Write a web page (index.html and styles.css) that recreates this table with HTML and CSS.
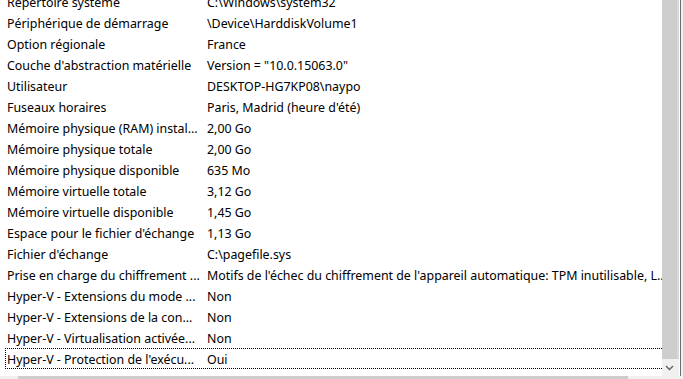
FILE: index.html
```html
<!DOCTYPE html>
<html lang="fr">
<head>
<meta charset="utf-8">
<link rel="stylesheet" href="styles.css">
</head>
<body>
<div class="window">
  <div class="main">
    <div class="list">
      <div class="rows">
        <div class="row"><span class="k">Répertoire système</span><span class="v">C:\Windows\system32</span></div>
        <div class="row"><span class="k">Périphérique de démarrage</span><span class="v">\Device\HarddiskVolume1</span></div>
        <div class="row"><span class="k">Option régionale</span><span class="v">France</span></div>
        <div class="row"><span class="k">Couche d'abstraction matérielle</span><span class="v">Version = "10.0.15063.0"</span></div>
        <div class="row"><span class="k">Utilisateur</span><span class="v">DESKTOP-HG7KP08\naypo</span></div>
        <div class="row"><span class="k">Fuseaux horaires</span><span class="v">Paris, Madrid (heure d'été)</span></div>
        <div class="row"><span class="k">Mémoire physique (RAM) instal...</span><span class="v">2,00 Go</span></div>
        <div class="row"><span class="k">Mémoire physique totale</span><span class="v">2,00 Go</span></div>
        <div class="row"><span class="k">Mémoire physique disponible</span><span class="v">635 Mo</span></div>
        <div class="row"><span class="k">Mémoire virtuelle totale</span><span class="v">3,12 Go</span></div>
        <div class="row"><span class="k">Mémoire virtuelle disponible</span><span class="v">1,45 Go</span></div>
        <div class="row"><span class="k">Espace pour le fichier d'échange</span><span class="v">1,13 Go</span></div>
        <div class="row"><span class="k">Fichier d'échange</span><span class="v">C:\pagefile.sys</span></div>
        <div class="row"><span class="k">Prise en charge du chiffrement ...</span><span class="v">Motifs de l'échec du chiffrement de l'appareil automatique: TPM inutilisable, L...</span></div>
        <div class="row"><span class="k">Hyper-V - Extensions du mode ...</span><span class="v">Non</span></div>
        <div class="row"><span class="k">Hyper-V - Extensions de la con...</span><span class="v">Non</span></div>
        <div class="row"><span class="k">Hyper-V - Virtualisation activée...</span><span class="v">Non</span></div>
        <div class="row focus"><span class="k">Hyper-V - Protection de l'exécu...</span><span class="v">Oui</span></div>
      </div>
    </div>
    <div class="vscroll">
      <div class="vthumb"></div>
      <div class="vbtn">
        <svg width="9" height="6" viewBox="0 0 9 6"><path d="M1 1 L4.5 4.5 L8 1" fill="none" stroke="#606060" stroke-width="1.4"/></svg>
      </div>
    </div>
    <div class="edge"></div>
  </div>
  <div class="hscroll">
    <div class="hbtn"></div>
    <div class="hthumb"></div>
    <div class="htrack"></div>
  </div>
</div>
</body>
</html>
```
FILE: styles.css
```css
html, body {
  margin: 0;
  padding: 0;
  background: #f0f0f0;
}
.window {
  width: 683px;
  height: 379px;
  overflow: hidden;
  display: flex;
  flex-direction: column;
  font-family: "Segoe UI", "Noto Sans", "Open Sans", sans-serif;
  font-size: 12.4px;
  color: #000;
}
.main {
  display: flex;
  height: 376px;
  flex: none;
}
.list {
  width: 662px;
  background: #fff;
  overflow: hidden;
}
.rows {
  margin-top: -9px;
}
.row {
  display: flex;
  height: 21px;
  align-items: center;
  white-space: nowrap;
  box-sizing: border-box;
  border: 1px solid transparent;
  margin-left: 5px;
  padding-top: 1px;
}
.k {
  width: 194px;
  padding-left: 1px;
  margin-right: 6px;
  overflow: hidden;
  flex: none;
}
.v {
  flex: none;
}
.focus {
  border: 1px dotted #000;
  margin-right: -4px;
}
.vscroll {
  width: 17px;
  display: flex;
  flex-direction: column;
  background: #f0f0f0;
}
.vthumb {
  height: 359px;
  background: #cdcdcd;
  border-right: 2px solid #d9d9d9;
  box-sizing: border-box;
  width: 17px;
}
.vbtn {
  flex: 1;
  display: flex;
  align-items: center;
  justify-content: center;
  padding-right: 2px;
}
.edge {
  width: 1px;
  background: #fff;
  border-right: 1px solid #6d6d6d;
}
.hscroll {
  flex: 1;
  display: flex;
  background: #f0f0f0;
}
.hbtn {
  width: 18px;
}
.hthumb {
  width: 610px;
  background: #cdcdcd;
}
.htrack {
  flex: 1;
}
```
